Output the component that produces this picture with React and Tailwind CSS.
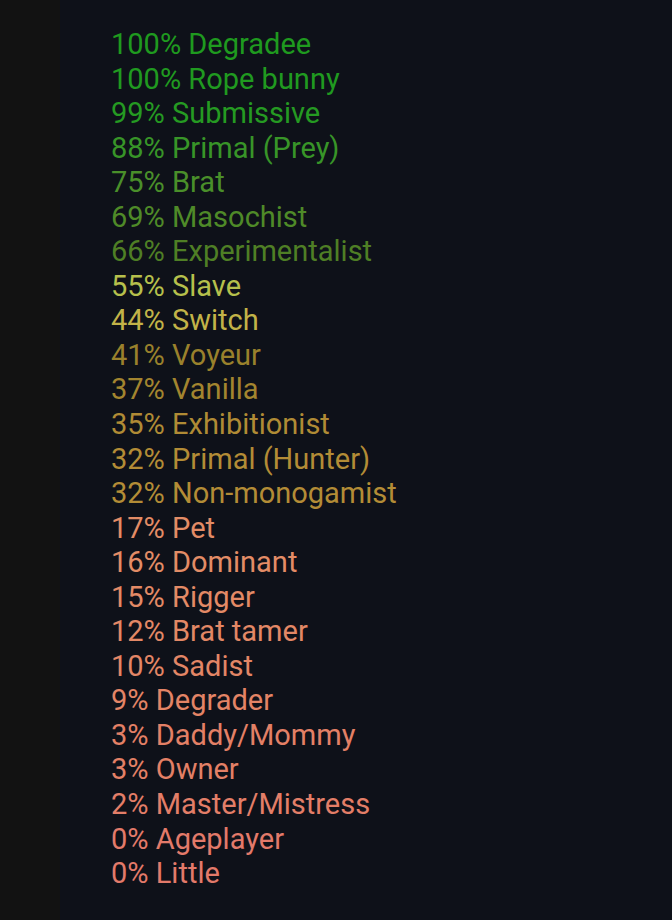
import React from 'react';

const rows = [
  ['100% Degradee', 'text-[#1f9a1f]'],
  ['100% Rope bunny', 'text-[#209a20]'],
  ['99% Submissive', 'text-[#259a22]'],
  ['88% Primal (Prey)', 'text-[#389528]'],
  ['75% Brat', 'text-[#4a8f2a]'],
  ['69% Masochist', 'text-[#4f8a28]'],
  ['66% Experimentalist', 'text-[#4f7f25]'],
  ['55% Slave', 'text-[#b6c04c]'],
  ['44% Switch', 'text-[#c2b348]'],
  ['41% Voyeur', 'text-[#9a812c]'],
  ['37% Vanilla', 'text-[#a3852f]'],
  ['35% Exhibitionist', 'text-[#b08b35]'],
  ['32% Primal (Hunter)', 'text-[#b38c36]'],
  ['32% Non-monogamist', 'text-[#b38c36]'],
  ['17% Pet', 'text-[#e38c66]'],
  ['16% Dominant', 'text-[#e38c66]'],
  ['15% Rigger', 'text-[#e38a66]'],
  ['12% Brat tamer', 'text-[#e38866]'],
  ['10% Sadist', 'text-[#e38666]'],
  ['9% Degrader', 'text-[#e38466]'],
  ['3% Daddy/Mommy', 'text-[#e38066]'],
  ['3% Owner', 'text-[#e38066]'],
  ['2% Master/Mistress', 'text-[#e37e68]'],
  ['0% Ageplayer', 'text-[#e37a6a]'],
  ['0% Little', 'text-[#e37a6a]'],
];

export default function App() {
  return (
    <div className="flex w-[672px] h-[920px] bg-[#121212] font-['Roboto',sans-serif]">
      <div className="w-[60px] shrink-0" />
      <div className="flex-1 bg-[#0e1119] pl-[51px] pt-[27px]">
        {rows.map(([label, color]) => (
          <div key={label} className={`text-[29px] leading-[34.55px] ${color}`}>
            {label}
          </div>
        ))}
      </div>
    </div>
  );
}
